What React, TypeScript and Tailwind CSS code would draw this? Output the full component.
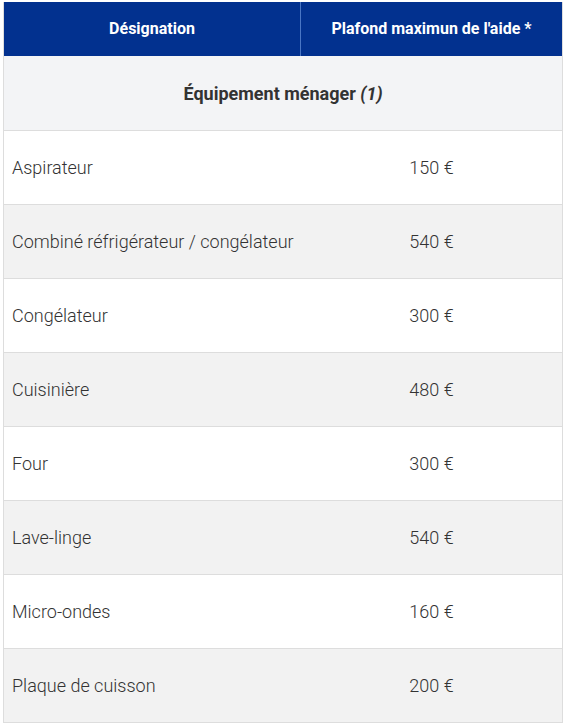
import React from "react";

const rows: [string, string][] = [
  ["Aspirateur", "150 €"],
  ["Combiné réfrigérateur / congélateur", "540 €"],
  ["Congélateur", "300 €"],
  ["Cuisinière", "480 €"],
  ["Four", "300 €"],
  ["Lave-linge", "540 €"],
  ["Micro-ondes", "160 €"],
  ["Plaque de cuisson", "200 €"],
];

export default function App() {
  return (
    <div className="w-[566px] h-[725px] bg-white overflow-hidden pt-[2px] pl-[3px]" style={{ fontFamily: "Roboto, 'Liberation Sans', sans-serif" }}>
      <div className="w-[560px] border-l border-r border-[#dddddd]">
        <div className="grid grid-cols-[297px_1fr] h-[54px] bg-[#02318f] text-white text-[16px] font-bold">
          <div className="flex items-center justify-center border-r border-[#4a76c4]">Désignation</div>
          <div className="flex items-center justify-center">Plafond maximun de l'aide *</div>
        </div>
        <div className="h-[75px] flex items-center justify-center bg-[#f3f4f6] border-b border-[#dddddd] text-[18px] font-bold text-[#333333]">
          Équipement ménager&nbsp;<i>(1)</i>
        </div>
        {rows.map(([a, b], i) => (
          <div
            key={a}
            className={`grid grid-cols-[297px_1fr] h-[74px] border-b border-[#dddddd] text-[18px] font-light text-[#333333] ${i % 2 === 1 ? "bg-[#f2f2f2]" : "bg-white"}`}
          >
            <div className="flex items-center pl-[8px]">{a}</div>
            <div className="flex items-center justify-center">{b}</div>
          </div>
        ))}
      </div>
    </div>
  );
}
